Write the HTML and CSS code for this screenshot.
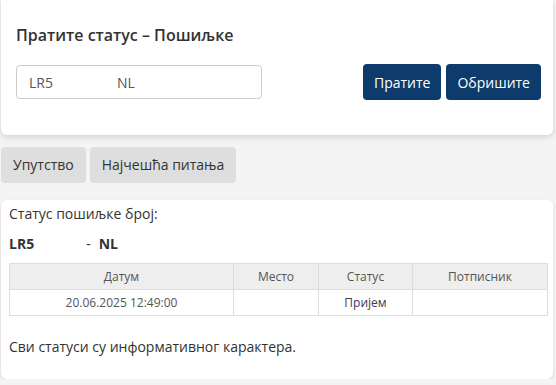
FILE: index.html
```html
<!DOCTYPE html>
<html lang="sr">
<head>
    <meta charset="UTF-8">
    <title>Пратите статус – Пошиљке</title>
    <link rel="stylesheet" href="styles.css">
</head>
<body>
    <div class="track">
        <h2>Пратите статус – Пошиљке</h2>
        <div class="track-row">
            <div class="field"><span>LR5</span><span class="gap"></span><span>NL</span></div>
            <div class="actions">
                <button class="btn">Пратите</button>
                <button class="btn">Обришите</button>
            </div>
        </div>
    </div>

    <div class="tabs">
        <div class="tab">Упутство</div>
        <div class="tab">Најчешћа питања</div>
    </div>

    <div class="result">
        <p class="label">Статус пошиљке број:</p>
        <p class="number"><span>LR5</span><span class="gap-sm"></span><span class="dash">-</span>NL</p>
        <table>
            <colgroup>
                <col class="c1">
                <col class="c2">
                <col class="c3">
                <col>
            </colgroup>
            <thead>
                <tr>
                    <th>Датум</th>
                    <th>Место</th>
                    <th>Статус</th>
                    <th>Потписник</th>
                </tr>
            </thead>
            <tbody>
                <tr>
                    <td>20.06.2025 12:49:00</td>
                    <td></td>
                    <td class="status">Пријем</td>
                    <td></td>
                </tr>
            </tbody>
        </table>
        <p class="note">Сви статуси су информативног карактера.</p>
    </div>
</body>
</html>
```

FILE: styles.css
```css
body {
    margin: 0;
    background-color: #f4f4f4;
    font-family: "Open Sans", sans-serif;
    color: #333;
}
.track {
    margin: 0 3px 0 1px;
    padding: 24px 12px 35px 15px;
    background-color: white;
    border-radius: 0 0 6px 6px;
    box-shadow: 0 2px 6px rgba(0,0,0,0.15);
}
h2 {
    margin: 0 0 18px 0;
    font-size: 16px;
    font-weight: 600;
    line-height: 22px;
    color: #333;
}
.track-row {
    display: flex;
    justify-content: space-between;
    align-items: center;
}
.field {
    display: flex;
    align-items: center;
    width: 220px;
    height: 32px;
    padding: 0 12px;
    border: 1px solid #ccc;
    border-radius: 4px;
    font-size: 14px;
    color: #555;
}
.gap {
    width: 64px;
}
.actions {
    display: flex;
    gap: 5px;
}
.btn {
    height: 36px;
    padding: 0 11px;
    background-color: #0c3b6c;
    color: white;
    border: none;
    border-radius: 4px;
    font-family: "Open Sans", sans-serif;
    font-size: 14px;
    cursor: pointer;
}
.tabs {
    display: flex;
    gap: 4px;
    margin: 12px 0 17px 1px;
}
.tab {
    height: 36px;
    line-height: 36px;
    padding: 0 12px;
    background-color: #dedede;
    border-radius: 4px;
    font-size: 14px;
    color: #333;
}
.result {
    margin: 0 3px 0 1px;
    padding: 4px 8px 22px 8px;
    background-color: white;
    border-radius: 6px;
    box-shadow: 0 2px 4px rgba(0,0,0,0.12);
    font-size: 14px;
}
.result p {
    margin: 0;
    line-height: 20px;
}
.number {
    margin-top: 10px !important;
    font-weight: bold;
}
.gap-sm {
    display: inline-block;
    width: 52px;
}
.dash {
    font-weight: normal;
    margin-right: 8px;
}
table {
    width: 539px;
    margin-top: 9px;
    border-collapse: collapse;
    table-layout: fixed;
    font-size: 12px;
    color: #555;
}
th, td {
    height: 25px;
    padding: 0;
    border: 1px solid #ddd;
    text-align: center;
    font-weight: normal;
}
th {
    background-color: #eee;
}
.c1 { width: 224px; }
.c2 { width: 85px; }
.c3 { width: 94px; }
.status {
    color: #4a3557;
}
.note {
    margin-top: 21px !important;
    color: #333;
}
```
